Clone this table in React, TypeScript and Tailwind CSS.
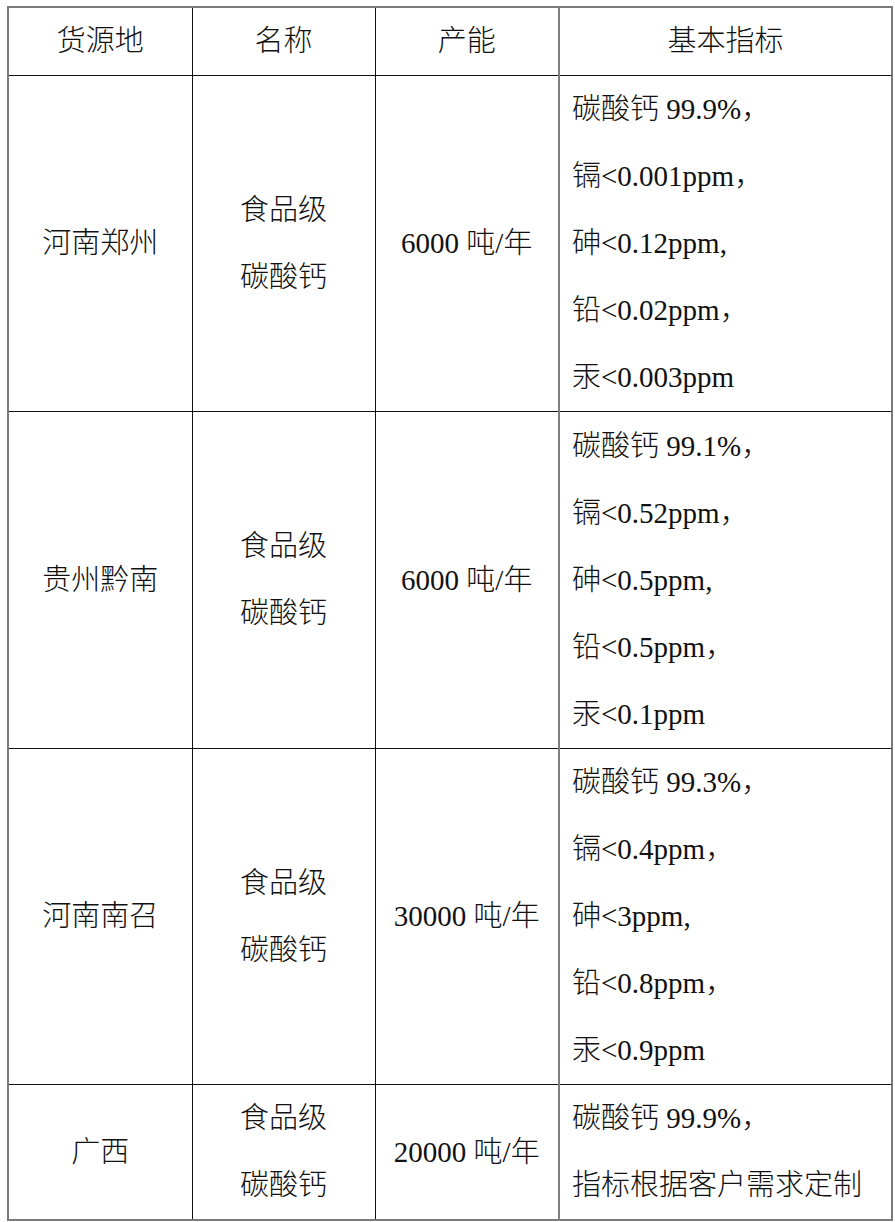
import React from "react";

type Row = {
  origin: string;
  name: string[];
  capacity: string;
  specs: string[];
  height: string;
};

const rows: Row[] = [
  {
    origin: "河南郑州",
    name: ["食品级", "碳酸钙"],
    capacity: "6000 吨/年",
    specs: ["碳酸钙 99.9%，", "镉<0.001ppm，", "砷<0.12ppm,", "铅<0.02ppm，", "汞<0.003ppm"],
    height: "h-[336px]",
  },
  {
    origin: "贵州黔南",
    name: ["食品级", "碳酸钙"],
    capacity: "6000 吨/年",
    specs: ["碳酸钙 99.1%，", "镉<0.52ppm，", "砷<0.5ppm,", "铅<0.5ppm，", "汞<0.1ppm"],
    height: "h-[337px]",
  },
  {
    origin: "河南南召",
    name: ["食品级", "碳酸钙"],
    capacity: "30000 吨/年",
    specs: ["碳酸钙 99.3%，", "镉<0.4ppm，", "砷<3ppm,", "铅<0.8ppm，", "汞<0.9ppm"],
    height: "h-[335px]",
  },
  {
    origin: "广西",
    name: ["食品级", "碳酸钙"],
    capacity: "20000 吨/年",
    specs: ["碳酸钙 99.9%，", "指标根据客户需求定制"],
    height: "h-[135px]",
  },
];

const cell = "border border-[#111] align-middle p-0";

export default function App() {
  return (
    <div
      className="w-[895px] h-[1222px] bg-white pl-[7px] pt-[6px] text-[#111] text-[29px] leading-[67px] font-light"
      style={{ fontFamily: '"Liberation Serif", "Noto Sans CJK SC", serif' }}
    >
      <table className="w-[884px] table-fixed border-collapse border-2 border-[#7a7a7a]">
        <colgroup>
          <col className="w-[184px]" />
          <col className="w-[183px]" />
          <col className="w-[184px]" />
          <col className="w-[333px]" />
        </colgroup>
        <thead>
          <tr className="h-[67px]">
            <th className={`${cell} font-light text-center border-t-2 border-t-[#7a7a7a] border-l-2 border-l-[#7a7a7a]`}>货源地</th>
            <th className={`${cell} font-light text-center border-t-2 border-t-[#7a7a7a]`}>名称</th>
            <th className={`${cell} font-light text-center border-t-2 border-t-[#7a7a7a]`}>产能</th>
            <th className={`${cell} font-light text-center border-t-2 border-t-[#7a7a7a] border-r-2 border-r-[#7a7a7a] border-l-2 border-l-[#808080]`}>
              基本指标
            </th>
          </tr>
        </thead>
        <tbody>
          {rows.map((r, i) => (
            <tr key={i} className={r.height}>
              <td className={`${cell} text-center border-l-2 border-l-[#7a7a7a]`}>{r.origin}</td>
              <td className={`${cell} text-center`}>
                {r.name.map((n) => (
                  <div key={n}>{n}</div>
                ))}
              </td>
              <td className={`${cell} text-center`}>{r.capacity}</td>
              <td className={`${cell} pl-[12px] border-r-2 border-r-[#7a7a7a] border-l-2 border-l-[#808080]`}>
                {r.specs.map((s) => (
                  <div key={s} className="whitespace-nowrap">
                    {s}
                  </div>
                ))}
              </td>
            </tr>
          ))}
        </tbody>
      </table>
    </div>
  );
}
